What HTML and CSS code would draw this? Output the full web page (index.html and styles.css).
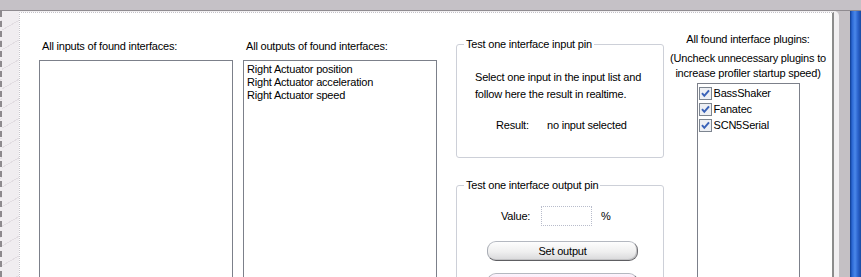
FILE: index.html
```html
<!DOCTYPE html>
<html>
<head>
<meta charset="utf-8">
<link rel="stylesheet" href="styles.css">
</head>
<body>
<div class="window">
  <div class="titlebar"></div>
  <div class="frame">
    <div class="leftedge"></div>
    <div class="sheet">
      <div class="panel">
        <section class="col col-inputs">
          <p class="caption">All inputs of found interfaces:</p>
          <div class="listbox"></div>
        </section>
        <section class="col col-outputs">
          <p class="caption">All outputs of found interfaces:</p>
          <ul class="listbox items">
            <li>Right Actuator position</li>
            <li>Right Actuator acceleration</li>
            <li>Right Actuator speed</li>
          </ul>
        </section>
        <section class="col col-test">
          <fieldset class="group group-in">
            <legend>Test one interface input pin</legend>
            <p class="hint">Select one input in the input list and<br>follow here the result in realtime.</p>
            <div class="result"><span class="result-label">Result:</span><span>no input selected</span></div>
          </fieldset>
          <fieldset class="group group-out">
            <legend>Test one interface output pin</legend>
            <div class="value-row">
              <label class="value-label">Value:</label>
              <span class="value-input"></span>
              <span class="pct">%</span>
            </div>
            <button class="btn">Set output</button>
            <button class="btn btn-pink"></button>
          </fieldset>
        </section>
        <section class="col col-plugins">
          <p class="plug-title">All found interface plugins:</p>
          <p class="plug-note">(Uncheck unnecessary plugins to<br>increase profiler startup speed)</p>
          <ul class="plug-list">
            <li><svg class="chk" width="13" height="13" viewBox="0 0 13 13"><rect x="0.5" y="0.5" width="12" height="12" fill="#eef0f4" stroke="#7d8590"/><path d="M3 6.2 L5.3 8.8 L10 3.4" fill="none" stroke="#3a62b8" stroke-width="2"/></svg><span>BassShaker</span></li>
            <li><svg class="chk" width="13" height="13" viewBox="0 0 13 13"><rect x="0.5" y="0.5" width="12" height="12" fill="#eef0f4" stroke="#7d8590"/><path d="M3 6.2 L5.3 8.8 L10 3.4" fill="none" stroke="#3a62b8" stroke-width="2"/></svg><span>Fanatec</span></li>
            <li><svg class="chk" width="13" height="13" viewBox="0 0 13 13"><rect x="0.5" y="0.5" width="12" height="12" fill="#eef0f4" stroke="#7d8590"/><path d="M3 6.2 L5.3 8.8 L10 3.4" fill="none" stroke="#3a62b8" stroke-width="2"/></svg><span>SCN5Serial</span></li>
          </ul>
        </section>
      </div>
    </div>
    <div class="gutter"></div>
    <div class="blue"></div>
  </div>
</div>
</body>
</html>
```
FILE: styles.css
```css
* { box-sizing: border-box; }
html, body { margin: 0; padding: 0; }
body {
  font-family: "Liberation Sans", Arial, sans-serif;
  font-size: 11px;
  line-height: 13px;
  letter-spacing: -0.2px;
  color: #000;
  background: #c6c2c6;
  overflow: hidden;
}
p, ul { margin: 0; padding: 0; list-style: none; }

.window { width: 861px; height: 277px; overflow: hidden; display: flex; flex-direction: column; }
.titlebar {
  height: 11px;
  flex: none;
  background: #c5c1c6;
  border-bottom: 1px solid #8f8b90;
}
.frame { flex: 1; display: flex; min-height: 0; }
.leftedge {
  width: 19px;
  flex: none;
  background:
    repeating-linear-gradient(150deg, transparent 0 16px, rgba(160,150,160,0.18) 16px 17px),
    #f0edf0;
  border-left: 2px dashed #8e8a8e;
}
.sheet {
  width: 820px;
  flex: none;
  background: #f1eff1;
  padding: 1px 5px 0 0;
  border-top-right-radius: 5px;
}
.panel {
  height: 100%;
  background: #fff;
  border-top: 1px dotted #c4c2c8;
  border-left: 1px dotted #c8c6cc;
  border-right: 2px solid #8c8c8c;
  display: flex;
  align-items: flex-start;
  padding-left: 19px;
}
.gutter { width: 11px; flex: none; background: #c4c0c4; }
.blue {
  width: 11px;
  flex: none;
  background: linear-gradient(to right, #0e3a8c 0, #2a66d2 2px, #4a88ea 5px, #2a62cc 8px, #1a4aa2 11px);
}

.col { flex: none; }
.col-inputs { width: 194px; padding-top: 27px; }
.col-outputs { width: 194px; margin-left: 10px; padding-top: 27px; }
.col-test { width: 208px; margin-left: 19px; padding-top: 25px; }
.col-plugins { width: 164px; margin-left: 2px; padding-top: 20px; text-align: center; }

.caption { padding-left: 3px; height: 13px; }
.listbox {
  margin-top: 7px;
  height: 240px;
  border: 1px solid #7c808a;
  background: #fff;
}
.items { padding: 2px 3px 0; }
.items li { height: 13px; white-space: nowrap; }

.group {
  margin: 0;
  padding: 0 0 25px 0;
  min-width: 0;
  width: 208px;
  border: 1px solid #cdd0d8;
  border-radius: 3px;
}
.group legend { padding: 0 2px; margin-left: 7px; line-height: 13px; }
.hint { margin: 18px 0 0 18px; line-height: 17px; white-space: nowrap; }
.result { margin: 16px 0 0 39px; display: flex; }
.result-label { width: 51px; }

.group-out { margin-top: 21px; height: 120px; }
.value-row { margin: 14px 0 0 44px; display: flex; align-items: center; height: 20px; }
.value-label { width: 40px; }
.value-input { width: 51px; height: 20px; border: 1px dotted #b8bccb; background: #fff; }
.pct { margin-left: 9px; }

.btn {
  display: block;
  font: inherit;
  letter-spacing: inherit;
  color: #000;
  margin: 15px 0 0 30px;
  width: 151px;
  height: 20px;
  padding: 0;
  border: 1px solid;
  border-color: #b4b8c0 #6e6e72 #5e5e62 #a8acb4;
  border-radius: 9px;
  background: linear-gradient(#fdfdfd, #efefef 55%, #d8d8da);
  box-shadow: inset -1px -1px 0 #c2c2c4;
}
.btn-pink {
  margin-top: 12px;
  background: linear-gradient(#fdf3fc, #f3def1 55%, #e6c8e3);
}

.plug-title { height: 13px; }
.plug-note { margin-top: 5px; line-height: 15px; white-space: nowrap; }
.plug-list {
  margin: 2px auto 0;
  width: 103px;
  height: 200px;
  border: 1px solid #7c808a;
  text-align: left;
  padding: 3px 0 0 1px;
}
.plug-list li { height: 16px; display: flex; align-items: flex-start; }
.chk { flex: none; display: block; }
.plug-list span { margin-left: 2px; line-height: 13px; }
```
